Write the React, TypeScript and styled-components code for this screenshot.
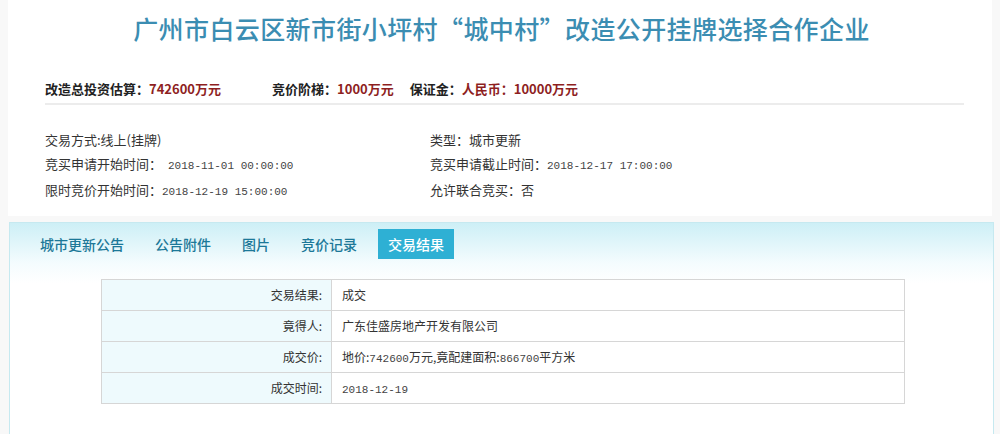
import React from "react";
import styled, { createGlobalStyle } from "styled-components";

const Global = createGlobalStyle`
  html, body { margin: 0; padding: 0; background: #f8f8f8; }
  body { font-family: "Noto Sans CJK SC", "Liberation Sans", sans-serif; color: #333; }
  * { box-sizing: border-box; }
`;

const Page = styled.div`
  width: 1000px;
  height: 434px;
  overflow: hidden;
  padding: 0 8px 0 8px;
  display: flex;
  flex-direction: column;
`;

const TopCard = styled.div`
  background: #fff;
  height: 216px;
  padding: 0 28px 0 37px;
  display: flex;
  flex-direction: column;
`;

const Title = styled.h1`
  margin: 11px 0 0 0;
  text-align: center;
  font-size: 25px;
  line-height: 34px;
  font-weight: 500;
  color: #3b8db2;
  letter-spacing: 0.4px;
  padding-right: 6px;
`;

const Summary = styled.div`
  margin-top: 35px;
  display: flex;
  font-size: 13px;
  font-weight: 700;
  line-height: 18px;
  color: #222;
  padding-bottom: 5px;
  border-bottom: 2px solid #ececec;
`;

const SummaryItem = styled.span<{ $gap?: number }>`
  margin-right: ${(p) => p.$gap ?? 0}px;
  white-space: nowrap;
`;

const Red = styled.span`
  color: #8e1f1f;
`;

const InfoGrid = styled.div`
  margin-top: 26px;
  display: grid;
  grid-template-columns: 385px 1fr;
  row-gap: 6px;
  font-size: 13px;
  line-height: 18px;
  color: #333;
`;

const InfoCell = styled.div`
  white-space: nowrap;
`;

const Mono = styled.span<{ $pad?: number }>`
  font-family: "Liberation Mono", monospace;
  font-size: 11px;
  color: #444;
  padding-left: ${(p) => p.$pad ?? 0}px;
`;

const Panel = styled.div`
  margin-top: 6px;
  margin-left: 1px;
  width: 985px;
  flex: 1;
  border: 1px solid #c6e9f0;
  border-bottom: none;
  background: linear-gradient(#cdeff6 0px, #f4fcfe 40px, #ffffff 60px);
  display: flex;
  flex-direction: column;
`;

const Tabs = styled.div`
  display: flex;
  gap: 11px;
  margin: 6px 0 0 20px;
`;

const Tab = styled.div<{ $active?: boolean }>`
  height: 30px;
  line-height: 30px;
  padding: 0 10px;
  font-size: 14px;
  font-weight: 500;
  color: ${(p) => (p.$active ? "#fff" : "#1c7898")};
  background: ${(p) => (p.$active ? "#2eb0d4" : "transparent")};
`;

const Table = styled.div`
  margin: 20px 0 0 91px;
  width: 804px;
  display: grid;
  grid-template-columns: 230px 1fr;
  border-top: 1px solid #d6d6d6;
  border-left: 1px solid #d6d6d6;
`;

const Label = styled.div`
  height: 31px;
  line-height: 30px;
  background: #eefafd;
  text-align: right;
  padding-right: 9px;
  font-size: 12px;
  color: #333;
  border-right: 1px solid #d6d6d6;
  border-bottom: 1px solid #d6d6d6;
`;

const Value = styled.div`
  height: 31px;
  line-height: 30px;
  padding-left: 10px;
  font-size: 12px;
  color: #333;
  background: #fff;
  border-right: 1px solid #d6d6d6;
  border-bottom: 1px solid #d6d6d6;
`;

export default function App() {
  return (
    <>
      <Global />
      <Page>
        <TopCard>
          <Title>广州市白云区新市街小坪村“城中村”改造公开挂牌选择合作企业</Title>
          <Summary>
            <SummaryItem $gap={51}>
              改造总投资估算：<Red>742600万元</Red>
            </SummaryItem>
            <SummaryItem $gap={16}>
              竞价阶梯：<Red>1000万元</Red>
            </SummaryItem>
            <SummaryItem>
              保证金：<Red>人民币：10000万元</Red>
            </SummaryItem>
          </Summary>
          <InfoGrid>
            <InfoCell>交易方式:线上(挂牌)</InfoCell>
            <InfoCell>类型：城市更新</InfoCell>
            <InfoCell>
              竞买申请开始时间：<Mono $pad={6}>2018-11-01 00:00:00</Mono>
            </InfoCell>
            <InfoCell>
              竞买申请截止时间：<Mono>2018-12-17 17:00:00</Mono>
            </InfoCell>
            <InfoCell>
              限时竞价开始时间：<Mono>2018-12-19 15:00:00</Mono>
            </InfoCell>
            <InfoCell>允许联合竞买：否</InfoCell>
          </InfoGrid>
        </TopCard>
        <Panel>
          <Tabs>
            <Tab>城市更新公告</Tab>
            <Tab>公告附件</Tab>
            <Tab>图片</Tab>
            <Tab>竞价记录</Tab>
            <Tab $active>交易结果</Tab>
          </Tabs>
          <Table>
            <Label>交易结果:</Label>
            <Value>成交</Value>
            <Label>竟得人:</Label>
            <Value>广东佳盛房地产开发有限公司</Value>
            <Label>成交价:</Label>
            <Value>
              地价:<Mono>742600</Mono>万元,竟配建面积:<Mono>866700</Mono>平方米
            </Value>
            <Label>成交时间:</Label>
            <Value>
              <Mono>2018-12-19</Mono>
            </Value>
          </Table>
        </Panel>
      </Page>
    </>
  );
}
